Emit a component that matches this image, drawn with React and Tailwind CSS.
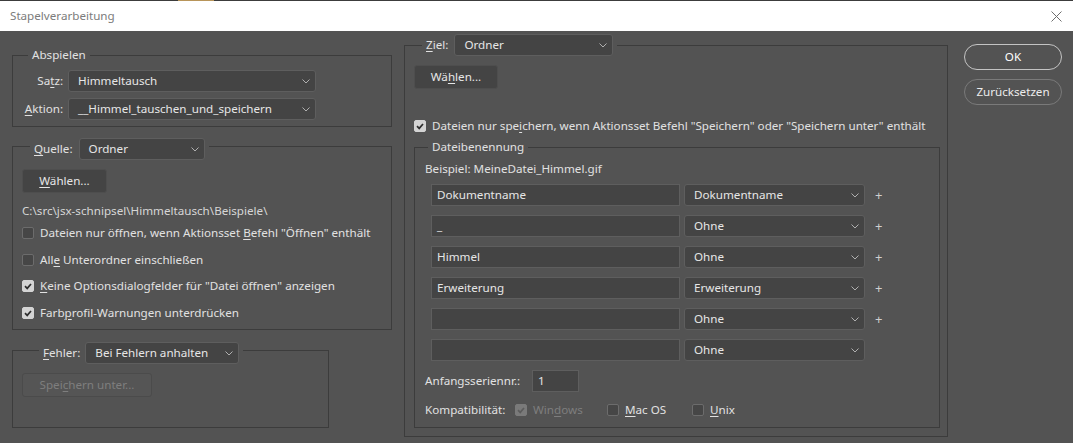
import React from "react";

// Photoshop "Stapelverarbeitung" dialog (dark UI)

const U = ({ children }) => (
  <span className="underline underline-offset-[2px] decoration-[1px]">{children}</span>
);

const Chevron = () => (
  <svg width="8" height="5" viewBox="0 0 8 5" className="shrink-0">
    <polyline points="0.5,0.5 4,4 7.5,0.5" fill="none" stroke="#b0b0b0" strokeWidth="1" />
  </svg>
);

const Select = ({ value, className = "" }) => (
  <div
    className={`h-[22px] flex items-center justify-between pl-[9px] pr-[5px] bg-[#444444] border border-[#5e5e5e] rounded-[3px] text-[#e6e6e6] ${className}`}
  >
    <span className="whitespace-nowrap leading-[16px]">{value}</span>
    <Chevron />
  </div>
);

const Input = ({ value = "", className = "" }) => (
  <div
    className={`h-[22px] flex items-center pl-[5px] bg-[#444444] border border-[#5e5e5e] text-[#e6e6e6] ${className}`}
  >
    <span className="whitespace-nowrap leading-[16px]">{value}</span>
  </div>
);

const Button = ({ children, className = "", disabled = false }) => (
  <div
    className={`h-[24px] flex items-center justify-center rounded-[3px] border ${
      disabled
        ? "bg-[#555555] border-[#4b4b4b] text-[#7e7e7e]"
        : "bg-[#444444] border-[#4e4e4e] text-[#e6e6e6]"
    } ${className}`}
  >
    {children}
  </div>
);

const Check = ({ checked = false, disabled = false }) => (
  <div
    className={`w-[12px] h-[12px] shrink-0 rounded-[2px] flex items-center justify-center border ${
      disabled
        ? "bg-[#7a7a7a] border-[#7a7a7a]"
        : checked
        ? "bg-[#d4d4d4] border-[#d4d4d4]"
        : "bg-[#464646] border-[#6c6c6c]"
    }`}
  >
    {checked && (
      <svg width="10" height="10" viewBox="0 0 10 10">
        <polyline
          points="2,5.2 4.2,7.4 8,3"
          fill="none"
          stroke={disabled ? "#5c5c5c" : "#2e2e2e"}
          strokeWidth="1.7"
        />
      </svg>
    )}
  </div>
);

const CheckRow = ({ checked, children, className = "" }) => (
  <div className={`h-[16px] flex items-center gap-[6px] ${className}`}>
    <Check checked={checked} />
    <span className="whitespace-nowrap leading-[16px]">{children}</span>
  </div>
);

const namingRows = [
  ["Dokumentname", "Dokumentname", true],
  ["_", "Ohne", true],
  ["Himmel", "Ohne", true],
  ["Erweiterung", "Erweiterung", true],
  ["", "Ohne", true],
  ["", "Ohne", false],
];

export default function App() {
  return (
    <div className="w-[1073px] h-[443px] overflow-hidden bg-[#535353] flex flex-col font-['Noto_Sans',sans-serif] text-[11.65px] text-[#e1e1e1]">
      {/* top strip */}
      <div className="h-[1px] flex bg-[#3c3c3c]">
        <div className="w-[178px]" />
        <div className="w-[36px] bg-[#b8955a]" />
      </div>

      {/* title bar */}
      <div className="h-[30px] bg-white flex items-center justify-between pl-[10px] pr-[11px]">
        <span className="text-[#7c7c7c]">Stapelverarbeitung</span>
        <svg width="11" height="11" viewBox="0 0 11 11">
          <path d="M0.5 0.5 L10.5 10.5 M10.5 0.5 L0.5 10.5" stroke="#6e6e6e" strokeWidth="1" />
        </svg>
      </div>

      <div className="flex flex-1">
        {/* left column */}
        <div className="pl-[12px] pt-[16px] flex flex-col w-[392px]">
          <fieldset className="min-w-0 w-[380px] border border-[#3c3c3c] pb-[6px]">
            <legend className="ml-[15px] px-[4px] leading-[16px]">Abspielen</legend>
            <div className="mt-[7px] grid grid-cols-[50px_248px] gap-x-[5px] gap-y-[6px] items-center">
              <span className="text-right leading-[16px]">
                Sa<U>t</U>z:
              </span>
              <Select value="Himmeltausch" />
              <span className="text-right leading-[16px]">
                <U>A</U>ktion:
              </span>
              <Select value="__Himmel_tauschen_und_speichern" />
            </div>
          </fieldset>

          <fieldset className="mt-[5px] min-w-0 w-[380px] border border-[#3c3c3c] pl-[9px] pb-[8px]">
            <legend className="ml-[8px] px-[4px] pt-[6px] flex items-center gap-[6px]">
              <span className="leading-[16px]">
                <U>Q</U>uelle:
              </span>
              <Select value="Ordner" className="w-[126px]" />
            </legend>
            <Button className="mt-[9px] w-[85px]">
              <span>
                <U>W</U>ählen...
              </span>
            </Button>
            <div className="mt-[10px] leading-[16px] text-[#d6d6d6] whitespace-nowrap">
              C:\src\jsx-schnipsel\Himmeltausch\Beispiele\
            </div>
            <CheckRow className="mt-[6px]">
              Dateien nur öffnen, wenn Aktionsset <U>B</U>efehl "Öffnen" enthält
            </CheckRow>
            <CheckRow className="mt-[11px]">
              All<U>e</U> Unterordner einschließen
            </CheckRow>
            <CheckRow checked className="mt-[10px]">
              <U>K</U>eine Optionsdialogfelder für "Datei öffnen" anzeigen
            </CheckRow>
            <CheckRow checked className="mt-[11px]">
              Farb<U>p</U>rofil-Warnungen unterdrücken
            </CheckRow>
          </fieldset>

          <fieldset className="mt-[6px] min-w-0 w-[317px] border border-[#3c3c3c] pl-[9px] pb-[30px]">
            <legend className="ml-[17px] px-[4px] pt-[6px] flex items-center gap-[5px]">
              <span className="leading-[16px]">
                <U>F</U>ehler:
              </span>
              <Select value="Bei Fehlern anhalten" className="w-[154px]" />
            </legend>
            <Button disabled className="mt-[9px] w-[130px]">
              <span>
                Spei<U>c</U>hern unter...
              </span>
            </Button>
          </fieldset>
        </div>

        {/* right column */}
        <div className="ml-[12px] pt-[3px]">
          <fieldset className="min-w-0 w-[544px] border border-[#3c3c3c] pl-[9px] pb-[8px]">
            <legend className="ml-[8px] px-[4px] flex items-center gap-[6px]">
              <span className="leading-[16px]">
                <U>Z</U>iel:
              </span>
              <Select value="Ordner" className="w-[159px]" />
            </legend>
            <Button className="mt-[9px] w-[84px]">
              <span>
                Wä<U>h</U>len...
              </span>
            </Button>
            <CheckRow checked className="mt-[29px]">
              Dateien nur spe<U>i</U>chern, wenn Aktionsset Befehl "Speichern" oder "Speichern unter" enthält
            </CheckRow>

            <fieldset className="mt-[5px] min-w-0 w-[526px] border border-[#3c3c3c] pl-[10px] pb-[9px]">
              <legend className="ml-[3px] px-[4px] leading-[16px]">Dateibenennung</legend>
              <div className="mt-[6px] leading-[16px] whitespace-nowrap">Beispiel: MeineDatei_Himmel.gif</div>
              <div className="mt-[7px] ml-[6px] flex flex-col gap-[9px]">
                {namingRows.map(([text, sel, plus], i) => (
                  <div key={i} className="flex items-center">
                    <Input value={text} className="w-[249px]" />
                    <Select value={sel} className="ml-[4px] w-[181px]" />
                    {plus && (
                      <span className="ml-[10px] text-[#cfcfcf] text-[13px] leading-[16px]">+</span>
                    )}
                  </div>
                ))}
              </div>
              <div className="mt-[9px] flex items-center">
                <span className="w-[107px] leading-[16px] whitespace-nowrap">Anfangsseriennr.:</span>
                <Input value="1" className="w-[47px]" />
              </div>
              <div className="mt-[10px] h-[16px] flex items-center">
                <span className="w-[90px] leading-[16px] whitespace-nowrap">Kompatibilität:</span>
                <div className="w-[92px] flex items-center gap-[6px]">
                  <Check checked disabled />
                  <span className="text-[#7e7e7e] leading-[16px]">
                    Win<U>d</U>ows
                  </span>
                </div>
                <div className="w-[85px] flex items-center gap-[6px]">
                  <Check />
                  <span className="leading-[16px]">
                    <U>M</U>ac OS
                  </span>
                </div>
                <div className="flex items-center gap-[6px]">
                  <Check />
                  <span className="leading-[16px]">
                    <U>U</U>nix
                  </span>
                </div>
              </div>
            </fieldset>
          </fieldset>
        </div>

        {/* buttons */}
        <div className="ml-[16px] pt-[13px] flex flex-col">
          <div className="w-[98px] h-[26px] rounded-full border border-[#c4c4c4] flex items-center justify-center text-white">
            OK
          </div>
          <div className="mt-[9px] w-[98px] h-[26px] rounded-full border border-[#7a7a7a] flex items-center justify-center text-[#ececec]">
            Zurücksetzen
          </div>
        </div>
      </div>
    </div>
  );
}
